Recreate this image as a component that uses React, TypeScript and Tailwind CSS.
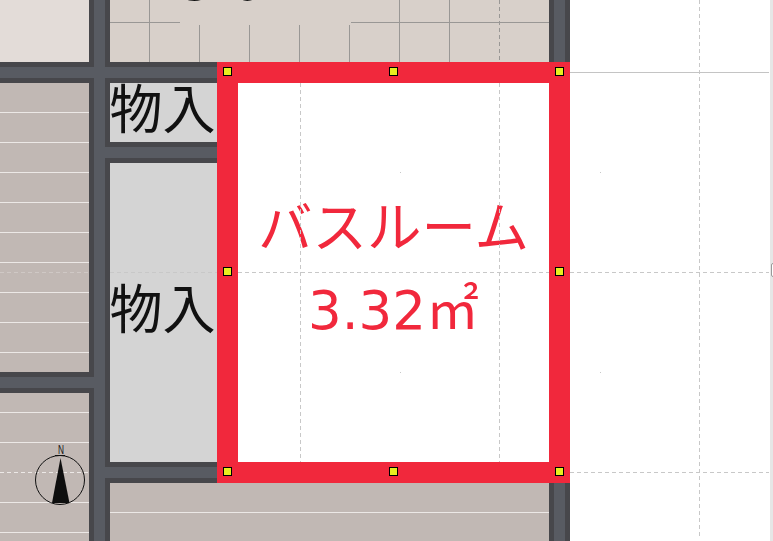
const jpFont = "font-['Noto_Sans_CJK_JP','Noto_Sans_CJK_SC',sans-serif]";
const areaFont = "font-['DejaVu_Sans','Noto_Sans_CJK_JP',sans-serif]";

const GRID_H = [272, 472];
const FLOOR_LEFT = [112, 142, 172, 202, 232, 262, 292, 322, 352, 412, 442, 502, 532];

function Handle({ className }: { className: string }) {
  return <div className={`absolute z-20 h-[9px] w-[9px] border border-black bg-[#e8ef1f] ${className}`} />;
}

function Guides() {
  return (
    <svg className="pointer-events-none absolute inset-0 z-10" width="773" height="541" shapeRendering="crispEdges">
      {/* floor boards */}
      {FLOOR_LEFT.map((y) => (
        <line key={y} x1="0" x2="89" y1={y + 0.5} y2={y + 0.5} stroke="#ece8e6" />
      ))}
      <line x1="110" x2="549" y1="512.5" y2="512.5" stroke="#ece8e6" />
      <line x1="0" x2="89" y1="472.5" y2="472.5" stroke="#ece8e6" strokeDasharray="4 3" />
      <line x1="0" x2="89" y1="272.5" y2="272.5" stroke="#cfc8c5" strokeDasharray="4 3" />
      <line x1="110" x2="217" y1="272.5" y2="272.5" stroke="#c8c8c8" strokeDasharray="4 3" />

      {/* tiles in the upper room */}
      <line x1="110" x2="180" y1="22.5" y2="22.5" stroke="#999795" />
      <line x1="351" x2="549" y1="22.5" y2="22.5" stroke="#999795" />
      <line x1="149.5" x2="149.5" y1="0" y2="62" stroke="#999795" />
      {[199, 249, 299, 349].map((x) => (
        <line key={x} x1={x + 0.5} x2={x + 0.5} y1="25" y2="62" stroke="#999795" />
      ))}
      {[399, 449].map((x) => (
        <line key={x} x1={x + 0.5} x2={x + 0.5} y1="0" y2="62" stroke="#999795" />
      ))}
      <line x1="499.5" x2="499.5" y1="0" y2="62" stroke="#999795" strokeDasharray="4 3" />

      {/* canvas guides */}
      {[300, 499].map((x) => (
        <line key={x} x1={x + 0.5} x2={x + 0.5} y1="83" y2="462" stroke="#c8c8c8" strokeDasharray="4 3" />
      ))}
      <line x1="238" x2="549" y1="272.5" y2="272.5" stroke="#c8c8c8" strokeDasharray="4 3" />
      <line x1="699.5" x2="699.5" y1="0" y2="537" stroke="#c8c8c8" strokeDasharray="4 3" />
      <line x1="570" x2="769" y1="72.5" y2="72.5" stroke="#c4c4c4" />
      {GRID_H.map((y) => (
        <line key={y} x1="570" x2="769" y1={y + 0.5} y2={y + 0.5} stroke="#c8c8c8" strokeDasharray="4 3" />
      ))}
      {[
        [400, 172],
        [600, 172],
        [400, 372],
        [600, 372],
      ].map(([x, y]) => (
        <rect key={`${x}-${y}`} x={x} y={y} width="1" height="1" fill="#c8c8c8" />
      ))}
    </svg>
  );
}

function Compass() {
  return (
    <svg className="absolute left-[30px] top-[442px] z-10" width="60" height="66" viewBox="30 442 60 66">
      <circle cx="60" cy="480" r="24.5" fill="none" stroke="#111" strokeWidth="1" />
      <path d="M60.5 458 L69.5 503 L52 503 Z" fill="#0e0e0e" />
      <line x1="55" x2="65" y1="455.5" y2="455.5" stroke="#111" />
      <text x="61" y="454" fontSize="13" fontFamily="Liberation Sans" textAnchor="middle" textLength="6" lengthAdjust="spacingAndGlyphs" fill="#111">
        N
      </text>
    </svg>
  );
}

export default function App() {
  return (
    <div className={`relative h-[541px] w-[773px] overflow-hidden bg-white ${jpFont}`}>
      <div className="grid h-full grid-cols-[89px_21px_107px_332px_21px_1fr] grid-rows-[62px_21px_59px_21px_209px_21px_69px_21px_58px]">
        {/* wall mass */}
        <div className="col-start-1 col-end-6 row-start-1 row-end-10 border-r-[5px] border-[#47474b] bg-[#585b62]" />

        {/* rooms */}
        <div className="col-start-1 row-start-1 bg-[#e3dcd8] shadow-[0_0_0_5px_#47474b]" />
        <div className="col-start-1 row-start-3 row-end-6 bg-[#c1b8b4] shadow-[0_0_0_5px_#47474b]" />
        <div className="col-start-1 row-start-7 row-end-10 bg-[#c1b8b4] shadow-[0_0_0_5px_#47474b]" />
        <div className="col-start-3 col-end-5 row-start-1 overflow-hidden bg-[#d8d0ca] shadow-[0_0_0_5px_#47474b]">
          <div className={`ml-[70px] mt-[-56px] whitespace-nowrap text-[53px] leading-[76px] text-[#111] ${areaFont}`}>3.04㎡</div>
        </div>
        <div className="col-start-3 row-start-3 flex items-center justify-center whitespace-nowrap bg-[#d4d4d4] pb-[12px] pr-[2px] text-[53px] leading-none text-[#111] shadow-[0_0_0_5px_#47474b]">
          物入
        </div>
        <div className="col-start-3 row-start-5 row-end-8 flex items-center justify-center whitespace-nowrap bg-[#d4d4d4] pb-[12px] pr-[2px] text-[53px] leading-none text-[#111] shadow-[0_0_0_5px_#47474b]">
          物入
        </div>
        <div className="col-start-3 col-end-5 row-start-9 bg-[#c1b8b4] shadow-[0_0_0_5px_#47474b]" />

        {/* selected room */}
        <div className="relative col-start-4 col-end-6 row-start-2 row-end-9 flex flex-col items-center justify-center border-[21px] border-[#f1283c] bg-white pb-[11px] text-[#f1283c]">
          <div className="whitespace-nowrap text-[54.5px] leading-[82px]">バスルーム</div>
          <div className={`mt-[5px] whitespace-nowrap text-[53px] leading-[82px] ${areaFont}`}>3.32㎡</div>
          <Handle className="left-[-15px] top-[-16px]" />
          <Handle className="left-[151px] top-[-16px]" />
          <Handle className="right-[-15px] top-[-16px]" />
          <Handle className="left-[-15px] top-[184px]" />
          <Handle className="right-[-15px] top-[184px]" />
          <Handle className="bottom-[-14px] left-[-15px]" />
          <Handle className="bottom-[-14px] left-[151px]" />
          <Handle className="bottom-[-14px] right-[-15px]" />
        </div>

        {/* right edge */}
        <div className="col-start-6 row-start-1 row-end-10 flex justify-end">
          <div className="relative w-[3px] bg-[#e6e6e6]">
            <div className="absolute left-[1px] top-[263px] h-[14px] w-[4px] rounded-l-[2px] border border-[#999] bg-white" />
          </div>
        </div>
      </div>
      <Guides />
      <Compass />
    </div>
  );
}
